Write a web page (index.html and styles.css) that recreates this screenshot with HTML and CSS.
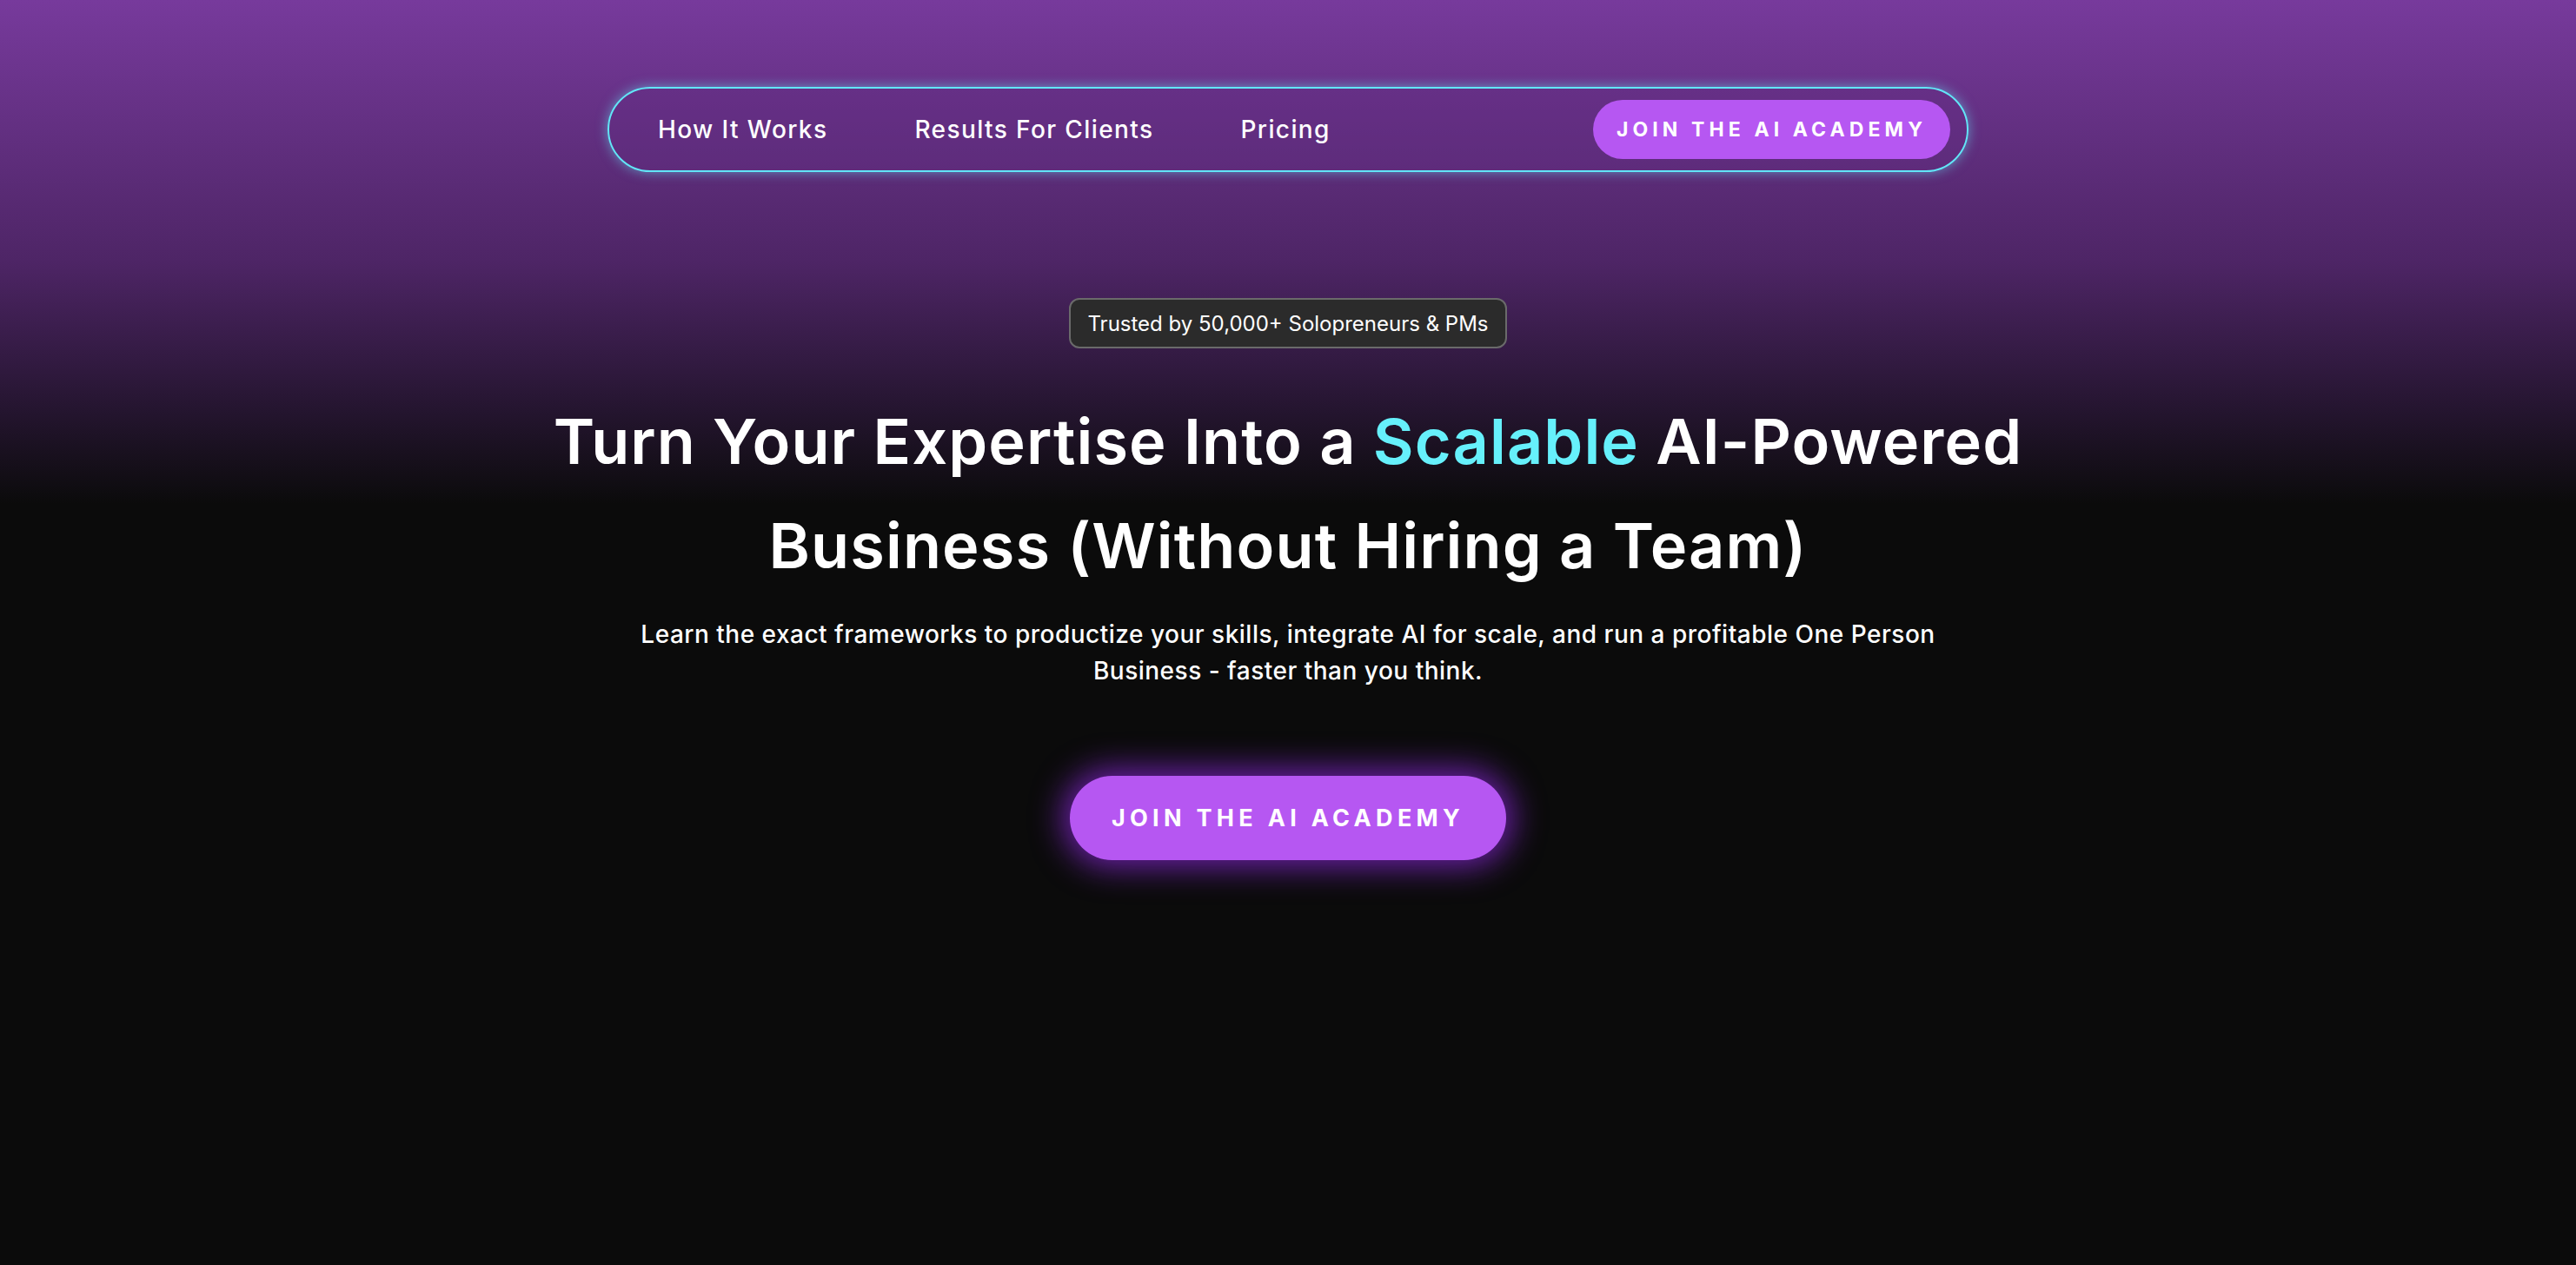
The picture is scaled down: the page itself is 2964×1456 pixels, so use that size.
FILE: index.html
```html
<!DOCTYPE html>
<html lang="en">
<head>
    <meta charset="UTF-8">
    <meta name="viewport" content="width=device-width, initial-scale=1.0">
    <title>AI Academy</title>
    <link rel="stylesheet" href="styles.css">
</head>
<body>
    <!-- Barra de navegación -->
    <nav class="nav">
        <div class="nav-links">
            <a href="#" class="nav-link">How It Works</a>
            <a href="#" class="nav-link">Results For Clients</a>
            <a href="#" class="nav-link">Pricing</a>
        </div>
        <a href="#" class="btn btn-small">JOIN THE AI ACADEMY</a>
    </nav>

    <!-- Sección principal -->
    <section class="hero">
        <div class="badge">Trusted by 50,000+ Solopreneurs &amp; PMs</div>
        <h1 class="title">Turn Your Expertise Into a <span class="accent">Scalable</span> AI-Powered Business (Without Hiring a Team)</h1>
        <p class="subtitle">Learn the exact frameworks to productize your skills, integrate AI for scale, and run a profitable One Person Business - faster than you think.</p>
        <a href="#" class="btn btn-big">JOIN THE AI ACADEMY</a>
    </section>
</body>
</html>
```
FILE: styles.css
```css
/* Estilos globales */
* {
    box-sizing: border-box;
}

html, body {
    margin: 0;
    padding: 0;
}

body {
    min-height: 100vh;
    background: linear-gradient(180deg, #773a9c 0px, #4e2566 300px, #251530 470px, #0b0b0b 580px, #0b0b0b 100%);
    background-color: #0b0b0b;
    color: #fff;
    font-family: Inter, "Noto Sans", sans-serif;
    padding-top: 100px;
}

a {
    color: #fff;
    text-decoration: none;
}

/* Navegación */
.nav {
    width: 1566px;
    height: 98px;
    margin: 0 auto;
    display: flex;
    align-items: center;
    justify-content: space-between;
    padding: 0 19px 0 56px;
    border: 2px solid #62e6f7;
    border-radius: 50px;
    background: rgba(98, 44, 128, 0.35);
    box-shadow: 0 0 14px rgba(98, 230, 247, 0.55);
}

.nav-links {
    display: flex;
    gap: 100px;
}

.nav-link {
    font-size: 28px;
    font-weight: 500;
    letter-spacing: 1.4px;
}

/* Botones */
.btn {
    display: inline-flex;
    align-items: center;
    justify-content: center;
    background-color: #b657f2;
    color: #fff;
    font-weight: 700;
    border-radius: 50px;
}

.btn-small {
    width: 411px;
    height: 68px;
    font-size: 23px;
    letter-spacing: 5.1px;
}

.btn-big {
    width: 502px;
    height: 97px;
    font-size: 27px;
    letter-spacing: 5.3px;
    box-shadow: 0 0 36px 8px rgba(140, 40, 220, 0.75);
}

/* Hero */
.hero {
    display: flex;
    flex-direction: column;
    align-items: center;
    text-align: center;
    padding-top: 145px;
}

.badge {
    height: 58px;
    padding: 0 19px;
    display: flex;
    align-items: center;
    background-color: #2b2b2b;
    border: 2px solid #6a6a6a;
    border-radius: 12px;
    font-size: 24px;
}

.title {
    width: 1800px;
    margin: 47px 0 0;
    font-size: 72px;
    font-weight: 600;
    line-height: 120px;
    letter-spacing: 1.1px;
}

.accent {
    color: #66f0fb;
}

.subtitle {
    width: 1540px;
    margin: 21px 0 100px;
    font-size: 28px;
    line-height: 42px;
    font-weight: 500;
    letter-spacing: 0.5px;
}
```
